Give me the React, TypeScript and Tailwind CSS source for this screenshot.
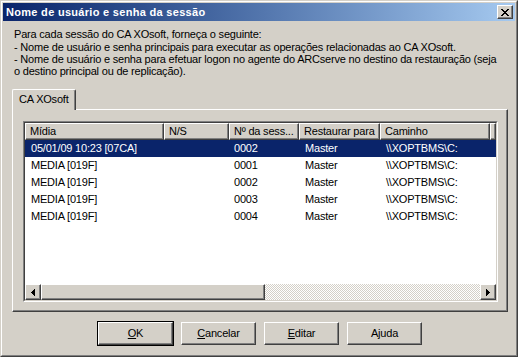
import * as React from "react";

const rows = [
  { media: "05/01/09 10:23 [07CA]", ns: "", session: "0002", target: "Master", path: "\\\\XOPTBMS\\C:", selected: true },
  { media: "MEDIA [019F]", ns: "", session: "0001", target: "Master", path: "\\\\XOPTBMS\\C:" },
  { media: "MEDIA [019F]", ns: "", session: "0002", target: "Master", path: "\\\\XOPTBMS\\C:" },
  { media: "MEDIA [019F]", ns: "", session: "0003", target: "Master", path: "\\\\XOPTBMS\\C:" },
  { media: "MEDIA [019F]", ns: "", session: "0004", target: "Master", path: "\\\\XOPTBMS\\C:" },
];

const columns = [
  { label: "Mídia", w: "w-[139px]" },
  { label: "N/S", w: "w-[65px]" },
  { label: "Nº da sess...", w: "w-[70px]" },
  { label: "Restaurar para", w: "w-[81px]" },
  { label: "Caminho", w: "w-[110px]" },
];

const raised =
  "border border-t-white border-l-white border-r-[#404040] border-b-[#404040] shadow-[inset_-1px_-1px_0_#808080]";

function Btn({ u, rest, pre, isDefault }: { u: string; rest: string; pre?: string; isDefault?: boolean }) {
  return (
    <button
      className={
        "h-[23px] w-[75px] bg-[#d4d0c8] text-[11px] text-black flex items-center justify-center " +
        (isDefault ? "outline outline-1 outline-black " : "") +
        raised
      }
    >
      <span>
        {pre}
        <span className="underline underline-offset-1">{u}</span>
        {rest}
      </span>
    </button>
  );
}

export default function App() {
  return (
    <div className="w-[518px] h-[357px] bg-[#d4d0c8] font-['Liberation_Sans',Arial,sans-serif] text-[11px] tracking-[-0.2px] text-black select-none">
      <div className="w-full h-full border border-t-[#d4d0c8] border-l-[#d4d0c8] border-r-[#404040] border-b-[#404040]">
        <div className="w-full h-full border border-t-white border-l-white border-r-[#808080] border-b-[#808080] p-px flex flex-col">
          {/* Title bar */}
          <div className="h-[18px] shrink-0 flex items-center justify-between pl-[3px] pr-[2px] bg-gradient-to-r from-[#0a246a] to-[#a6caf0]">
            <span className="text-white font-bold text-[11px] leading-none tracking-[0.3px]">Nome de usuário e senha da sessão</span>
            <div className={"w-[16px] h-[14px] bg-[#d4d0c8] flex items-center justify-center " + raised}>
              <svg width="8" height="7" viewBox="0 0 8 7" shapeRendering="crispEdges">
                <path d="M0 0h2v1h-2zM6 0h2v1h-2zM1 1h2v1h-2zM5 1h2v1h-2zM2 2h4v1h-4zM3 3h2v1h-2zM2 4h4v1h-4zM1 5h2v1h-2zM5 5h2v1h-2zM0 6h2v1h-2zM6 6h2v1h-2z" fill="#000" />
              </svg>
            </div>
          </div>

          {/* Instructions */}
          <div className="mt-[7px] pl-[11px] leading-[12px] whitespace-nowrap">
            <div className="h-[13px]">Para cada sessão do CA XOsoft, forneça o seguinte:</div>
            <div>- Nome de usuário e senha principais para executar as operações relacionadas ao CA XOsoft.</div>
            <div>- Nome de usuário e senha para efetuar logon no agente do ARCserve no destino da restauração (seja</div>
            <div>o destino principal ou de replicação).</div>
          </div>

          {/* Tabs */}
          <div className="mt-[12px] ml-[9px] flex">
            <div className="relative z-10 h-[21px] w-[64px] border border-t-white border-l-white border-b-0 border-r-[#404040] shadow-[inset_-1px_0_0_#808080] bg-[#d4d0c8] rounded-t-[2px] pl-[6px] pt-[3px] leading-[13px]">
              CA XOsoft
            </div>
          </div>
          <div className="-mt-px ml-[9px] w-[496px] h-[203px] border border-t-white border-l-white border-r-[#404040] border-b-[#404040] shadow-[inset_-1px_-1px_0_#808080] pt-[11px] pl-[10px]">
            {/* List view */}
            <div className="w-[475px] h-[181px] border border-t-[#808080] border-l-[#808080] border-r-white border-b-white">
              <div className="w-full h-full border border-t-[#404040] border-l-[#404040] border-r-[#d4d0c8] border-b-[#d4d0c8] bg-white flex flex-col">
                <div className="flex h-[17px] shrink-0">
                  {columns.map((c) => (
                    <div key={c.label} className={c.w + " h-full bg-[#d4d0c8] pl-[4px] leading-[14px] whitespace-nowrap overflow-hidden " + raised}>
                      {c.label}
                    </div>
                  ))}
                  <div className={"flex-1 h-full bg-[#d4d0c8] " + raised} />
                </div>
                <div className="flex-1">
                  {rows.map((r, i) => (
                    <div key={i} className={"flex h-[17px] items-center whitespace-nowrap " + (r.selected ? "bg-[#0a246a] text-white" : "")}>
                      <div className="w-[139px] pl-[6px]">{r.media}</div>
                      <div className="w-[65px] pl-[5px]">{r.ns}</div>
                      <div className="w-[70px] pl-[5px]">{r.session}</div>
                      <div className="w-[81px] pl-[6px]">{r.target}</div>
                      <div className="w-[110px] pl-[6px]">{r.path}</div>
                    </div>
                  ))}
                </div>
                {/* Horizontal scrollbar */}
                <div className="h-[16px] shrink-0 flex bg-[repeating-conic-gradient(#d4d0c8_0_25%,#ffffff_0_50%)] bg-[length:2px_2px]">
                  <div className={"w-[16px] h-full bg-[#d4d0c8] flex items-center justify-center " + raised}>
                    <svg width="4" height="7" viewBox="0 0 4 7" shapeRendering="crispEdges">
                      <path d="M0 3.5L4 0V7Z" fill="#000" />
                    </svg>
                  </div>
                  <div className={"w-[224px] h-full bg-[#d4d0c8] " + raised} />
                  <div className="flex-1" />
                  <div className={"w-[16px] h-full bg-[#d4d0c8] flex items-center justify-center " + raised}>
                    <svg width="4" height="7" viewBox="0 0 4 7" shapeRendering="crispEdges">
                      <path d="M4 3.5L0 0V7Z" fill="#000" />
                    </svg>
                  </div>
                </div>
              </div>
            </div>
          </div>

          {/* Buttons */}
          <div className="mt-[10px] ml-[95px] flex gap-[8px]">
            <Btn u="O" rest="K" isDefault />
            <Btn u="C" rest="ancelar" />
            <Btn u="E" rest="ditar" />
            <Btn pre="A" u="j" rest="uda" />
          </div>
        </div>
      </div>
    </div>
  );
}
